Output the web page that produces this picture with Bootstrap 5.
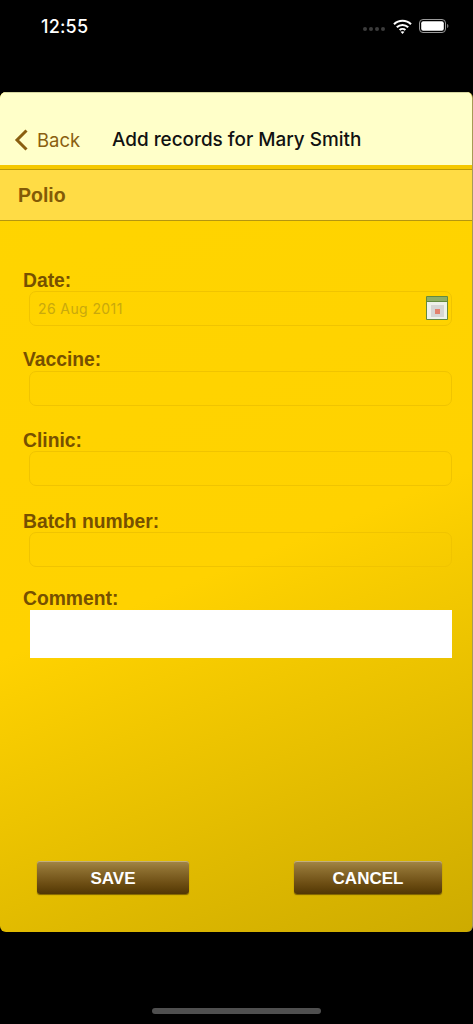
<!DOCTYPE html>
<html lang="en">
<head>
<meta charset="utf-8">
<title>Add records</title>
<link href="https://cdn.jsdelivr.net/npm/bootstrap@5.3.0/dist/css/bootstrap.min.css" rel="stylesheet">
<style>
html,body{height:100%;background:#000;overflow:hidden}
body{width:473px;height:1024px;font-family:"Liberation Sans",Arial,sans-serif}
.status-zone{height:92px;padding:16px 24px 0 41px;color:#fff}
.clock{font-family:Inter,"Liberation Sans",sans-serif;font-size:18px;font-weight:500;line-height:21px;letter-spacing:.2px}
.status-icons{gap:7px;margin-top:0;height:20px}
.sig-dots{gap:2px;margin-top:6px;margin-right:1px}
.sig-dots i{display:block;width:4px;height:4px;border-radius:50%;background:#3c3c3c}
.panel{height:840px;border-radius:6px;overflow:hidden;background:linear-gradient(158deg,#ffd500 0%,#ffd200 55%,#cdab00 100%);border-right:1px solid #a69a55}
.head-bar{height:73px;background:#ffffc9;padding:35px 0 0 14px;border-top:1px solid #d5d59f}
.back-link{color:#8a5f10;font-family:Inter,"Liberation Sans",sans-serif;font-size:18.500px;line-height:24px;width:98px;gap:8px;text-decoration:none}
.head-title{color:#111;font-family:Inter,"Liberation Sans",sans-serif;font-size:18.900px;font-weight:500;line-height:24px}
.sub-gap{height:4px;background:#f5c800;border-bottom:1px solid #bd9a06;box-sizing:content-box}
.sub-bar{height:51px;background:#ffdc45;border-bottom:1px solid #b5960f;padding:0 18px;color:#835a06;font-size:19.500px;font-weight:700;line-height:50px}
.form-zone{padding:49px 21px 0 23px}
.f-label{display:block;color:#765000;font-size:19.300px;font-weight:700;line-height:21px;margin:0}
.f-box{display:block;width:423px;height:35px;margin:1px 0 0 6px;padding:0 8px;border:1px solid #f0c400;border-radius:7px;background:transparent;color:#c9a90c;font-family:Inter,"Liberation Sans",sans-serif;font-size:14px;line-height:33px;outline:0}
.date-first .f-box{margin-top:0}
.f-gap{margin-bottom:23px}
.f-gap-v{margin-bottom:23px}
.f-gap-b{margin-bottom:24px}
.f-gap-c{margin-bottom:21px}
.f-nudge .f-label{padding-top:1px}
.f-nudge .f-box{margin-top:0}
.date-box{position:relative;letter-spacing:.4px}
.cal-ico{position:absolute;right:3px;top:4px;width:22px;height:24px}
.note-box{display:block;width:422px;height:48px;margin:1px 0 0 7px;background:#fff;border:0;border-radius:0;outline:0;resize:none}
.btn-row{padding:0 30px 0 37px;margin-top:203px}
.gold-btn{height:33px;border:0;border-radius:3px;padding:2px 0 0;color:#fff;font-size:17px;font-weight:700;line-height:31px;background:linear-gradient(#a38647 0,#8d6f30 25%,#6b4c12 70%,#523704 100%);box-shadow:inset 0 1px 0 #c3b07e,0 1px 1px rgba(60,40,0,.6)}
.gold-btn:hover,.gold-btn:active{color:#fff;background:linear-gradient(#a38647 0,#8d6f30 25%,#6b4c12 70%,#523704 100%)}
.save-w{width:152px}
.cancel-w{width:148px}
.foot-zone{height:92px}
.home-pill{width:169px;height:6px;border-radius:3px;background:#4f4f4f;margin-top:76px}
</style>
</head>
<body>
<div class="status-zone d-flex justify-content-between align-items-start">
  <span class="clock">12:55</span>
  <div class="status-icons d-flex align-items-center">
    <div class="sig-dots d-flex"><i></i><i></i><i></i><i></i></div>
    <svg width="19" height="15" viewBox="0 0 19 15" aria-hidden="true"><path d="M1 5.2C5.8.6 13.2.6 18 5.2M3.8 8.2c3.2-3 8.2-3 11.4 0M6.6 11c1.6-1.4 4.2-1.4 5.8 0" fill="none" stroke="#fff" stroke-width="2.1"/><path d="M9.5 15l-2-2.2c1.1-.9 2.9-.9 4 0z" fill="#fff"/></svg>
    <svg width="30" height="14" viewBox="0 0 30 14" aria-hidden="true"><rect x=".5" y=".5" width="26" height="13" rx="3.5" fill="none" stroke="#9a9a9a"/><rect x="2.200" y="2.200" width="22.600" height="9.600" rx="2" fill="#fff"/><path d="M28 5v4c.9-.3 1.400-1.100 1.400-2S28.900 5.300 28 5z" fill="#777"/></svg>
  </div>
</div>
<main class="panel">
  <div class="head-bar d-flex align-items-start">
    <a class="back-link d-flex align-items-center" href="#">
      <svg width="15" height="24" viewBox="0 0 15 24" aria-hidden="true"><path d="M12.500 2.500 3 12l9.500 9.500" fill="none" stroke="#8a5f10" stroke-width="3"/></svg>
      <span>Back</span>
    </a>
    <span class="head-title">Add records for Mary Smith</span>
  </div>
  <div class="sub-gap"></div>
  <div class="sub-bar">Polio</div>
  <form class="form-zone">
    <div class="f-gap date-first">
      <label class="f-label">Date:</label>
      <div class="f-box date-box">26 Aug 2011
        <svg class="cal-ico" viewBox="0 0 22 24" aria-hidden="true"><rect width="22" height="24" rx="1" fill="#648a3e"/><rect x="1" y="1" width="20" height="4" fill="#8fae66"/><rect x="1" y="6" width="20" height="17" fill="#eef1ea"/><rect x="5" y="9" width="13" height="12" fill="#d6d6d4"/><rect x="9" y="13" width="5" height="5" fill="#e2806c"/></svg>
      </div>
    </div>
    <div class="f-gap-v">
      <label class="f-label">Vaccine:</label>
      <input class="f-box" type="text" aria-label="Vaccine">
    </div>
    <div class="f-gap-b f-nudge">
      <label class="f-label">Clinic:</label>
      <input class="f-box" type="text" aria-label="Clinic">
    </div>
    <div class="f-gap-c f-nudge">
      <label class="f-label">Batch number:</label>
      <input class="f-box" type="text" aria-label="Batch number">
    </div>
    <div>
      <label class="f-label">Comment:</label>
      <textarea class="note-box" aria-label="Comment"></textarea>
    </div>
  </form>
  <div class="btn-row d-flex justify-content-between">
    <button type="button" class="btn gold-btn save-w">SAVE</button>
    <button type="button" class="btn gold-btn cancel-w">CANCEL</button>
  </div>
</main>
<div class="foot-zone d-flex justify-content-center"><div class="home-pill"></div></div>
<script src="https://cdn.jsdelivr.net/npm/bootstrap@5.3.0/dist/js/bootstrap.bundle.min.js"></script>
</body>
</html>
